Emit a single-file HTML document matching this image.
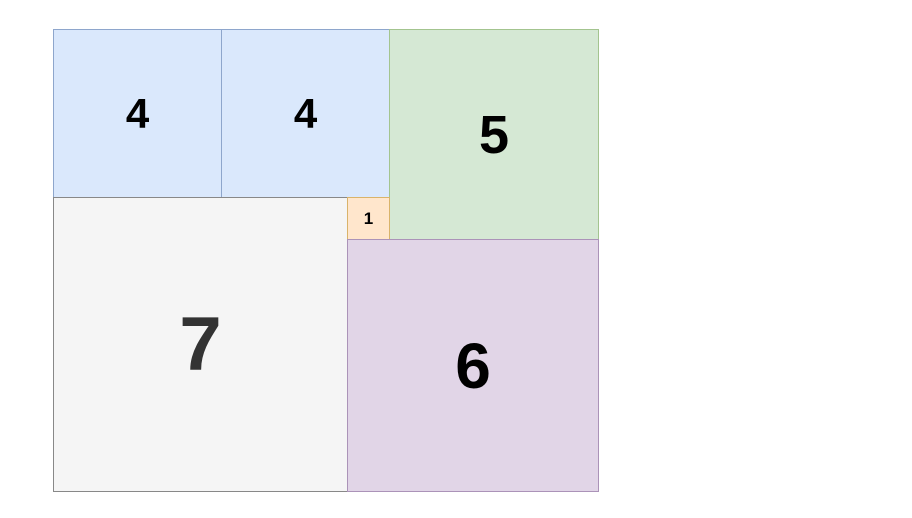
<!DOCTYPE html><html><head><style>
body{margin:0;width:912px;height:518px;background:#fff;position:relative;overflow:hidden;font-family:"Liberation Sans",Arial,sans-serif;font-weight:bold}
.b{position:absolute;box-sizing:border-box;display:flex;align-items:center;justify-content:center;color:#000}
</style></head><body>
<div class="b" style="left:53px;top:29px;width:169px;height:169px;background:#dae8fc;border:1px solid #8ea6cc;font-size:42px">4</div>
<div class="b" style="left:221px;top:29px;width:169px;height:169px;background:#dae8fc;border:1px solid #8ea6cc;font-size:42px">4</div>
<div class="b" style="left:389px;top:29px;width:210px;height:211px;background:#d5e8d4;border:1px solid #a3c48f;font-size:54px">5</div>
<div class="b" style="left:53px;top:197px;width:295px;height:295px;background:#f5f5f5;border:1px solid #888;font-size:76px;color:#333">7</div>
<div class="b" style="left:347px;top:197px;width:43px;height:43px;background:#ffe6cc;border:1px solid #d9b36a;font-size:17px">1</div>
<div class="b" style="left:347px;top:239px;width:252px;height:253px;background:#e1d5e7;border:1px solid #ab93b8;font-size:64px">6</div>
</body></html>
